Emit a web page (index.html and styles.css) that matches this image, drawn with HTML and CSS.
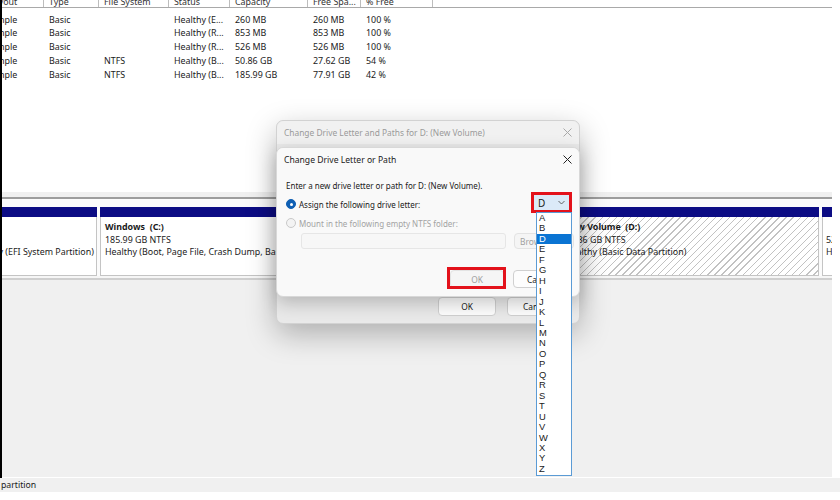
FILE: index.html
```html
<!DOCTYPE html>
<html>
<head>
<meta charset="utf-8">
<link rel="stylesheet" href="styles.css">
</head>
<body>
<div class="screen">
  <div class="main">
    <div class="app">
      <div class="vol-pane">
        <div class="thead">
          <div class="th c1"><span class="cut">Layout</span></div>
          <div class="th">Type</div>
          <div class="th">File System</div>
          <div class="th">Status</div>
          <div class="th">Capacity</div>
          <div class="th">Free Spa...</div>
          <div class="th">% Free</div>
          <div class="th last"></div>
        </div>
        <div class="rows">
          <div class="tr"><div class="td c1"><span class="cut">Simple</span></div><div class="td">Basic</div><div class="td"></div><div class="td">Healthy (E...</div><div class="td">260 MB</div><div class="td">260 MB</div><div class="td">100 %</div><div class="td"></div></div>
          <div class="tr"><div class="td c1"><span class="cut">Simple</span></div><div class="td">Basic</div><div class="td"></div><div class="td">Healthy (R...</div><div class="td">853 MB</div><div class="td">853 MB</div><div class="td">100 %</div><div class="td"></div></div>
          <div class="tr"><div class="td c1"><span class="cut">Simple</span></div><div class="td">Basic</div><div class="td"></div><div class="td">Healthy (R...</div><div class="td">526 MB</div><div class="td">526 MB</div><div class="td">100 %</div><div class="td"></div></div>
          <div class="tr"><div class="td c1"><span class="cut">Simple</span></div><div class="td">Basic</div><div class="td">NTFS</div><div class="td">Healthy (B...</div><div class="td">50.86 GB</div><div class="td">27.62 GB</div><div class="td">54 %</div><div class="td"></div></div>
          <div class="tr"><div class="td c1"><span class="cut">Simple</span></div><div class="td">Basic</div><div class="td">NTFS</div><div class="td">Healthy (B...</div><div class="td">185.99 GB</div><div class="td">77.91 GB</div><div class="td">42 %</div><div class="td"></div></div>
        </div>
      </div>
      <div class="split"></div>
      <div class="disk">
        <div class="part p1">
          <div class="bar"></div>
          <div class="pbody"><div class="ln">&nbsp;</div><div class="ln">&nbsp;</div><div class="ln"><span class="cut2">Healthy (EFI System Partition)</span></div></div>
        </div>
        <div class="part p2">
          <div class="bar"></div>
          <div class="pbody"><div class="ln b">Windows&nbsp; (C:)</div><div class="ln">185.99 GB NTFS</div><div class="ln">Healthy (Boot, Page File, Crash Dump, Basic Data Partition)</div></div>
        </div>
        <div class="part p3">
          <div class="bar"></div>
          <div class="pbody hatch"><div class="ln b">New Volume&nbsp; (D:)</div><div class="ln">50.86 GB NTFS</div><div class="ln">Healthy (Basic Data Partition)</div></div>
        </div>
        <div class="part p4">
          <div class="bar"></div>
          <div class="pbody"><div class="ln">&nbsp;</div><div class="ln">526 MB</div><div class="ln">Healthy (Recovery Partition)</div></div>
        </div>
      </div>
      <div class="under"></div>
      <div class="empty"></div>
    </div>
    <div class="rstrip"></div>
  </div>
  <div class="status">partition</div>
  <div class="foot"></div>
</div>

<div class="dlg outer">
  <div class="title"><span>Change Drive Letter and Paths for D: (New Volume)</span>
    <svg class="x" width="9" height="9" viewBox="0 0 9 9"><path d="M0.5 0.5L8.5 8.5M8.5 0.5L0.5 8.5" stroke="#a8a8a8" stroke-width="1"/></svg>
  </div>
  <div class="spacer"></div>
  <div class="btns"><div class="btn">OK</div><div class="btn">Cancel</div></div>
</div>

<div class="dlg inner">
  <div class="title act"><span>Change Drive Letter or Path</span>
    <svg class="x" width="9" height="9" viewBox="0 0 9 9"><path d="M0.5 0.5L8.5 8.5M8.5 0.5L0.5 8.5" stroke="#222" stroke-width="1"/></svg>
  </div>
  <div class="body">
    <div class="intro">Enter a new drive letter or path for D: (New Volume).</div>
    <div class="opt"><span class="radio on"></span><span>Assign the following drive letter:</span></div>
    <div class="opt dis"><span class="radio"></span><span>Mount in the following empty NTFS folder:</span></div>
    <div class="pathrow"><div class="field"></div><div class="btn dis browse">Browse...</div></div>
    <div class="btnrow"><div class="btn dis">OK</div><div class="btn">Cancel</div></div>
  </div>
</div>

<div class="combo"><span>D</span><svg width="7" height="5" viewBox="0 0 7 5"><path d="M0.5 1L3.5 4L6.5 1" fill="none" stroke="#555" stroke-width="0.9"/></svg></div>
<div class="redbox rb-combo"></div>
<div class="redbox rb-ok"></div>

<div class="list">
  <div class="it">A</div><div class="it">B</div><div class="it sel">D</div><div class="it">E</div><div class="it">F</div><div class="it">G</div><div class="it">H</div><div class="it">I</div><div class="it">J</div><div class="it">K</div><div class="it">L</div><div class="it">M</div><div class="it">N</div><div class="it">O</div><div class="it">P</div><div class="it">Q</div><div class="it">R</div><div class="it">S</div><div class="it">T</div><div class="it">U</div><div class="it">V</div><div class="it">W</div><div class="it">X</div><div class="it">Y</div><div class="it">Z</div>
</div>
</body>
</html>
```

FILE: styles.css
```css
* { box-sizing: border-box; margin: 0; padding: 0; }
html, body { width: 840px; height: 500px; overflow: hidden; background: #fff; }
body {
  font-family: "Noto Sans", "Open Sans", sans-serif;
  font-size: 8.4px;
  color: #1a1a1a;
  position: relative;
}
.screen { display: flex; flex-direction: column; width: 840px; height: 500px; }
.main { display: flex; height: 478px; }
.app { width: 832px; border-left: 2px solid #000; display: flex; flex-direction: column; }
.rstrip { width: 8px; background: #fff; }

.vol-pane { height: 192px; background: #fff; font-size: 8.9px; }
.thead, .tr {
  display: grid;
  grid-template-columns: 42px 55px 70px 61px 78px 53px 72px 1fr;
}
.thead { height: 8px; border-bottom: 1px solid #a9a9a9; overflow: hidden; }
.th {
  border-right: 1px solid #bdbdbd;
  padding-left: 5px;
  line-height: 4px;
  white-space: nowrap;
  overflow: hidden;
  color: #333;
}
.th.last { border-right: none; }
.rows { padding-top: 4.5px; }
.tr { height: 13.75px; line-height: 13.75px; }
.td { padding-left: 5px; white-space: nowrap; overflow: hidden; }
.c1 { padding-left: 0; }
.cut { display: inline-block; margin-left: -13px; }

.split {
  height: 15px;
  background: linear-gradient(#f0f0f0 0 5px, #9d9d9d 5px 7px, #fbfbfb 7px);
}
.disk { display: flex; gap: 3px; height: 69px; background: #fbfbfb; font-size: 8.9px; }
.part { display: flex; flex-direction: column; min-width: 0; }
.p1 { flex: 0 0 95px; }
.p2 { flex: 0 0 457px; }
.p3 { flex: 0 0 259px; }
.p4 { flex: 1 1 auto; }
.bar { height: 10px; background: #0c0c84; }
.pbody {
  flex: 1;
  background: #fff;
  border: 1px solid #c4c4c4;
  border-top: none;
  padding: 4px 4px 0;
  line-height: 12.5px;
  overflow: hidden;
  white-space: nowrap;
}
.p1 .pbody { border-left: none; padding-left: 0; }
.p4 .pbody { padding-left: 3px; border-right: none; }
.ln.b { font-weight: 700; }
.cut2 { display: inline-block; margin-left: -31px; }
.hatch {
  background: repeating-linear-gradient(135deg, #fff 0 4px, #c2c2c2 4px 5px);
}
.under {
  height: 5px;
  background: linear-gradient(#f6f6f6 0 2px, #cfcfcf 2px 4px, #f0f0f0 4px);
}
.empty { flex: 1; background: #f0f0f0; border-bottom: 1px solid #fff; }
.status {
  height: 14px;
  background: #f0f0f0;
  line-height: 15px;
  padding-left: 1px;
  width: 840px;
  font-size: 8.7px;
}
.foot { flex: 1; background: #fff; }

/* dialogs */
.dlg {
  position: absolute;
  display: flex;
  flex-direction: column;
  border-radius: 7px;
}
.outer {
  left: 276px; top: 120px; width: 304px; height: 204px;
  background: #e9e9e9;
  border: 1px solid #d2d2d2;
  box-shadow: 0 10px 30px rgba(0,0,0,0.28);
}
.inner {
  left: 276px; top: 147px; width: 304px; height: 150px;
  background: #f9f9f9;
  border: 1px solid #d8d8d8;
  box-shadow: 0 6px 18px rgba(0,0,0,0.22);
}
.title {
  height: 23px;
  display: flex;
  align-items: center;
  justify-content: space-between;
  padding: 0 7px 0 7px;
  color: #9a9a9a;
  background: #f1f1f1;
  border-radius: 7px 7px 0 0;
}
.title.act { color: #1a1a1a; background: #f9f9f9; font-size: 8.6px; }
.spacer { flex: 1; }
.btns { display: flex; justify-content: flex-end; gap: 11px; padding: 0 14px 7px 0; }
.btn {
  width: 58px; height: 19px;
  background: #fdfdfd;
  border: 1px solid #d0d0d0;
  border-radius: 4px;
  display: flex; align-items: center; justify-content: center;
  color: #1a1a1a;
}
.btn.dis { color: #a0a0a0; background: #f5f5f5; border-color: #e3e3e3; }

.body { padding: 9px 0 0 9px; display: flex; flex-direction: column; font-size: 8px; }
.intro { line-height: 12px; }
.opt { display: flex; align-items: center; gap: 3px; height: 14px; margin-top: 5px; }
.opt.dis { color: #a3a3a3; margin-top: 5px; }
.radio {
  width: 10px; height: 10px; border-radius: 50%;
  border: 1px solid #c9c9c9; background: #f3f3f3;
}
.radio.on { background: #0f5fb3; border-color: #0f5fb3; position: relative; }
.radio.on::after {
  content: ""; position: absolute; left: 2.5px; top: 2.5px;
  width: 3px; height: 3px; border-radius: 50%; background: #fff;
}
.pathrow { display: flex; gap: 8px; margin: 3px 0 0 15px; }
.field { width: 205px; height: 16px; background: #f7f7f7; border: 1px solid #e6e6e6; border-radius: 3px; }
.browse { width: 60px; height: 16px; justify-content: flex-start; padding-left: 5px; font-size: 8.4px; }
.btnrow { display: flex; gap: 9px; margin: 21px 0 0 164px; font-size: 8.4px; }
.btnrow .btn { width: 54px; height: 18px; }

.combo {
  position: absolute; left: 534px; top: 195px; width: 35px; height: 15px;
  background: #dbeaf8;
  display: flex; align-items: center; justify-content: space-between;
  padding: 0 4px 0 4px;
  font-size: 10px; color: #1a1a1a;
}
.redbox { position: absolute; border: 3px solid #e3121b; }
.rb-combo { left: 531px; top: 192px; width: 41px; height: 21px; }
.rb-ok { left: 447px; top: 267px; width: 59px; height: 22px; }

.list {
  position: absolute; left: 536px; top: 212px; width: 36px; height: 264px;
  background: #fff;
  border: 1px solid #5b9bd5;
  font-family: "Liberation Sans", Arial, sans-serif;
  font-size: 9.4px;
}
.it { height: 10.46px; line-height: 10.46px; padding-left: 2px; color: #1a1a1a; }
.it.sel { background: #0a74d3; color: #fff; }
```
